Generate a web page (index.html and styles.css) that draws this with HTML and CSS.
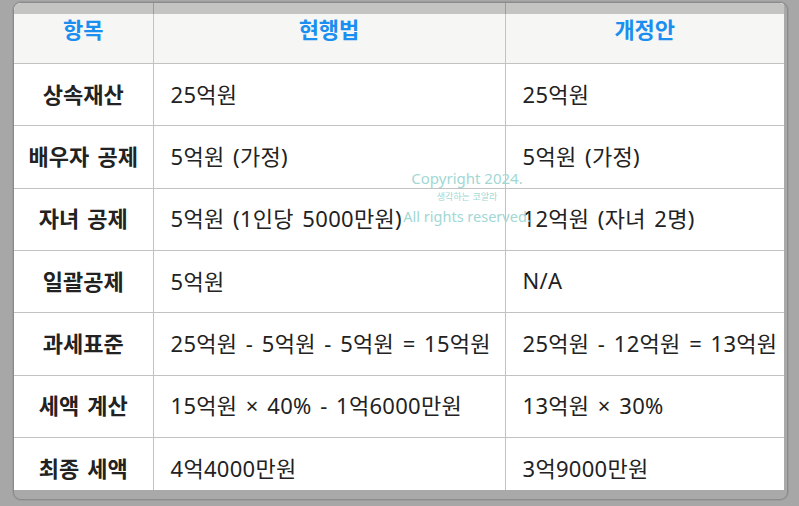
FILE: index.html
```html
<!DOCTYPE html>
<html lang="ko">
<head>
<meta charset="utf-8">
<title>상속세 비교</title>
<link rel="stylesheet" href="styles.css">
</head>
<body>
<div class="frame">
  <div class="viewport">
    <table class="tax">
      <colgroup>
        <col class="c1"><col class="c2"><col class="c3">
      </colgroup>
      <thead>
        <tr class="head"><th>항목</th><th>현행법</th><th>개정안</th></tr>
      </thead>
      <tbody>
        <tr><th>상속재산</th><td>25억원</td><td>25억원</td></tr>
        <tr><th>배우자 공제</th><td>5억원 (가정)</td><td>5억원 (가정)</td></tr>
        <tr><th>자녀 공제</th><td>5억원 (1인당 5000만원)</td><td>12억원 (자녀 2명)</td></tr>
        <tr><th>일괄공제</th><td>5억원</td><td>N/A</td></tr>
        <tr><th>과세표준</th><td>25억원 - 5억원 - 5억원 = 15억원</td><td>25억원 - 12억원 = 13억원</td></tr>
        <tr><th>세액 계산</th><td>15억원 × 40% - 1억6000만원</td><td>13억원 × 30%</td></tr>
        <tr><th>최종 세액</th><td>4억4000만원</td><td>3억9000만원</td></tr>
      </tbody>
    </table>
    <div class="shade"></div>
    <div class="watermark">
      <div class="wm-top">Copyright 2024.</div>
      <div class="wm-mid">생각하는 코알라</div>
      <div class="wm-bot">All rights reserved.</div>
    </div>
  </div>
</div>
</body>
</html>
```

FILE: styles.css
```css
html, body {
  margin: 0;
  padding: 0;
}
body {
  background: #a7a7a7;
  font-family: "Noto Sans", "Noto Sans CJK KR", sans-serif;
  padding: 2px 0 0 13px;
  height: 506px;
  box-sizing: border-box;
  overflow: hidden;
}
.frame {
  width: 775px;
  height: 498px;
  box-sizing: border-box;
  border: 1px solid #8b8b8b;
  border-radius: 8px;
  background: #a9a9a9;
  overflow: hidden;
  padding: 0 3px 8px 0;
  box-shadow: 0 0 0 1px #9c9c9c;
}
.viewport {
  position: relative;
  width: 770px;
  height: 487px;
  overflow: hidden;
  background: #fff;
}
.tax {
  width: 770px;
  border-collapse: collapse;
  table-layout: fixed;
}
.c1 { width: 139px; }
.c2 { width: 352px; }
.c3 { width: 279px; }
.tax th, .tax td {
  border: 1px solid #c2c2c2;
  padding: 0 0 4px 17px;
  font-size: 22px;
  letter-spacing: 0.3px;
  word-spacing: 2.5px;
  color: #222;
  text-align: left;
  font-weight: 400;
  white-space: nowrap;
  overflow: visible;
}
.tax tr > :first-child { border-left: none; }
.tax tr > :last-child { border-right: none; }
.tax tbody th {
  text-align: center;
  padding: 0 0 4px 0;
  font-weight: 700;
  letter-spacing: 0;
}
.head th {
  height: 50px;
  background: #f6f6f4;
  color: #1b8ff0;
  font-weight: 700;
  text-align: center;
  padding: 0 0 10px 0;
  letter-spacing: 0;
  border-top: none;
}
.tax tbody tr {
  height: 62.33px;
}
.shade {
  position: absolute;
  left: 0;
  top: 0;
  width: 770px;
  height: 11px;
  background: rgba(0, 0, 0, 0.2);
}
.watermark {
  position: absolute;
  left: 353px;
  top: 165px;
  width: 200px;
  text-align: center;
  color: #a2d8d4;
  font-family: "Noto Sans", sans-serif;
  pointer-events: none;
}
.wm-top { font-size: 15px; line-height: 20px; }
.wm-mid { font-size: 9px; line-height: 18px; font-family: "Noto Sans CJK KR", sans-serif; }
.wm-bot { font-size: 14.5px; line-height: 20px; }
```
